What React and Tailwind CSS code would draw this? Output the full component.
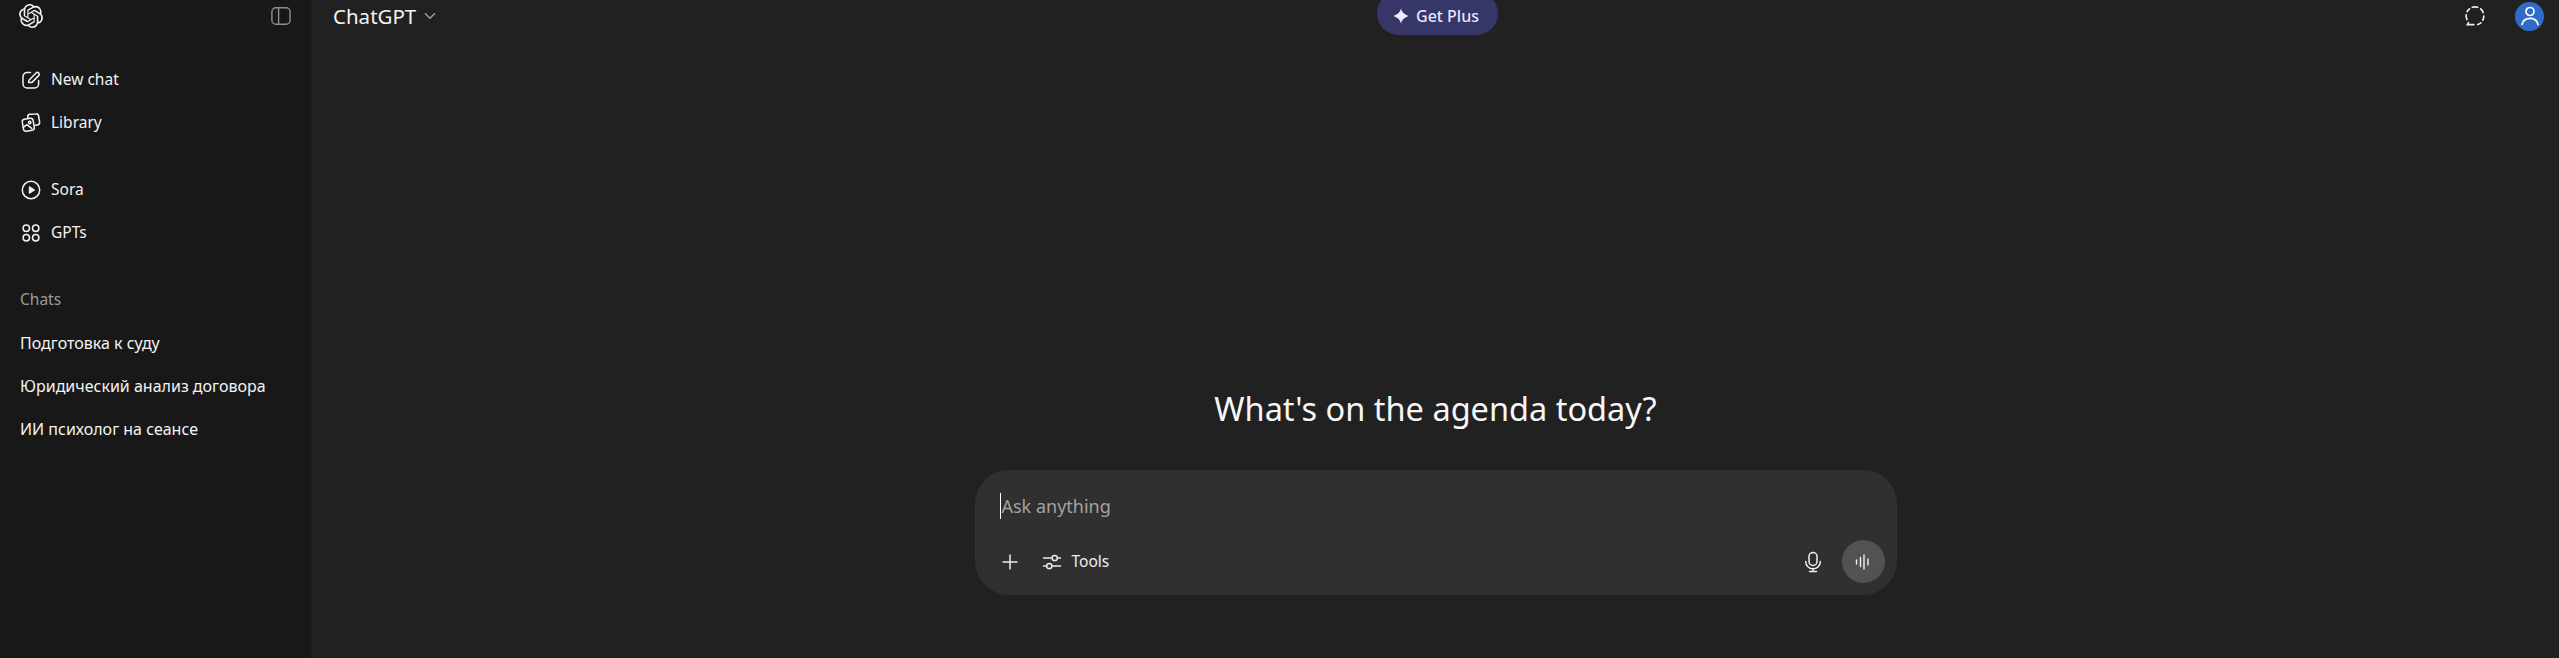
import { SiOpenai } from 'react-icons/si';
import { ChevronDown, Plus } from 'lucide-react';

const PanelIcon = () => (
  <svg width="20" height="20" viewBox="0 0 20 20" fill="none" stroke="#8f8f8f" strokeWidth="1.4">
    <rect x="0.9" y="1.7" width="18.2" height="16.6" rx="4" />
    <path d="M7.6 1.7v16.6" />
  </svg>
);

const NewChatIcon = () => (
  <svg width="20" height="20" viewBox="0 0 20 20" fill="none" stroke="#f3f3f3" strokeWidth="1.5" strokeLinecap="round" strokeLinejoin="round">
    <path d="M9.5 2.6H6A4 4 0 0 0 2 6.6v7.4a4 4 0 0 0 4 4h7.6a4 4 0 0 0 4-4v-3.6" />
    <path d="M7.6 12.6l.5-2.6 7-7a1.8 1.8 0 0 1 2.6 2.6l-7 7z" />
  </svg>
);

const LibraryIcon = () => (
  <svg width="20" height="20" viewBox="0 0 20 20" fill="none" stroke="#f3f3f3" strokeWidth="1.5" strokeLinecap="round" strokeLinejoin="round">
    <path d="M1.3 9.2a2.6 2.6 0 0 1 2.1-3l5.7-1a2.6 2.6 0 0 1 3 2.1l1.2 7a2.6 2.6 0 0 1-2.1 3l-5.7 1a2.6 2.6 0 0 1-3-2.1z" />
    <path d="M7 5.5l-.2-1.2a2.6 2.6 0 0 1 2.1-3L14.6 .9a2.6 2.6 0 0 1 3 2.1l1 5.9a2.6 2.6 0 0 1-2.1 3l-2.3.4" />
    <circle cx="8.7" cy="9.5" r="1.2" />
    <path d="M2.3 14.3l3.5-2.6 5 3.7" />
  </svg>
);

const SoraIcon = () => (
  <svg width="20" height="20" viewBox="0 0 20 20" fill="none">
    <circle cx="10" cy="10" r="8.7" stroke="#f3f3f3" strokeWidth="1.5" />
    <path d="M7.8 6.8a.6.6 0 0 1 .9-.5l5 3.2a.6.6 0 0 1 0 1l-5 3.2a.6.6 0 0 1-.9-.5z" fill="#f3f3f3" />
  </svg>
);

const GptsIcon = () => (
  <svg width="20" height="20" viewBox="0 0 20 20" fill="none" stroke="#f3f3f3" strokeWidth="1.5">
    <circle cx="5.3" cy="5.3" r="3.2" />
    <circle cx="14.7" cy="5.3" r="3.2" />
    <circle cx="5.3" cy="14.7" r="3.2" />
    <circle cx="14.7" cy="14.7" r="3.2" />
  </svg>
);

const Spark = () => (
  <svg width="16" height="16" viewBox="0 0 16 16" fill="#eeeaff">
    <path d="M8 .5c.9 3.6 3 5.8 7.5 7.5C11 9.7 8.9 11.9 8 15.5 7.1 11.9 5 9.7.5 8 5 6.3 7.1 4.1 8 .5z" />
  </svg>
);

const TempChatIcon = () => (
  <svg width="22" height="22" viewBox="0 0 22 22" fill="none" stroke="#f0f0f0" strokeWidth="1.7" strokeLinecap="round">
    <path d="M8.3 2.3a9 9 0 0 1 5.4 0" />
    <path d="M16.7 3.8a9 9 0 0 1 2.5 3.7" />
    <path d="M19.8 11a9 9 0 0 1-1 4.2" />
    <path d="M16.9 17.8c-1 .8-2 1.3-3.2 1.7" />
    <path d="M9.8 19.7H3.4l1.1-2" />
    <path d="M2.9 14.5a9 9 0 0 1-.7-4.6" />
    <path d="M3.2 6.5a9 9 0 0 1 2.3-2.7" />
  </svg>
);

const SlidersIcon = () => (
  <svg width="20" height="20" viewBox="0 0 20 20" fill="none" stroke="#ececec" strokeWidth="1.5" strokeLinecap="round">
    <path d="M1.5 6h8.5M15.5 6h3" />
    <circle cx="12.7" cy="6" r="2.6" />
    <path d="M1.5 14h3M10 14h8.5" />
    <circle cx="7.3" cy="14" r="2.6" />
  </svg>
);

const MicIcon = () => (
  <svg width="20" height="22" viewBox="0 0 20 22" fill="none" stroke="#f0f0f0" strokeWidth="1.5" strokeLinecap="round">
    <rect x="6" y="1.5" width="8" height="13" rx="4" />
    <path d="M2.7 10.5a7.3 7.3 0 0 0 14.6 0" />
    <path d="M10 18v2.5M6.5 20.5h7" />
  </svg>
);

const VoiceIcon = () => (
  <svg width="18" height="16" viewBox="0 0 18 16" fill="none" stroke="#f0f0f0" strokeWidth="1.4" strokeLinecap="round">
    <path d="M2.5 6v4M6.5 3.5v9M10 1v14M14 5v6" />
  </svg>
);

const UserIcon = () => (
  <svg width="22" height="22" viewBox="0 0 22 22" fill="none" stroke="#fff" strokeWidth="1.7" strokeLinecap="round">
    <circle cx="11" cy="6.5" r="4" />
    <path d="M3 19.5c.8-4 4-6.2 8-6.2s7.200 2.200 8 6.200" />
  </svg>
);

const NavItem = ({ icon, label }) => (
  <div className="flex h-[43px] items-center gap-[10px] pl-[21px] text-[15.5px] text-[#f3f3f3]">
    {icon}
    <span>{label}</span>
  </div>
);

const ChatItem = ({ label }) => (
  <div className="flex h-[43px] items-center pl-[20px] text-[16px] text-[#f3f3f3]">{label}</div>
);

export default function App() {
  return (
    <div className="flex h-screen overflow-hidden bg-[#212121] font-['Noto_Sans',sans-serif]">
      <aside className="flex w-[312px] shrink-0 flex-col border-r border-[#1f1f1f] bg-[#181818]">
        <div className="flex h-[32px] items-center justify-between pl-[19px] pr-[20px]">
          <SiOpenai size={24} color="#f3f3f3" />
          <PanelIcon />
        </div>
        <nav className="mt-[26px]">
          <NavItem icon={<NewChatIcon />} label="New chat" />
          <NavItem icon={<LibraryIcon />} label="Library" />
        </nav>
        <nav className="mt-[24px]">
          <NavItem icon={<SoraIcon />} label="Sora" />
          <NavItem icon={<GptsIcon />} label="GPTs" />
        </nav>
        <div className="mt-[24px]">
          <div className="flex h-[43px] items-center pl-[20px] text-[15.5px] text-[#9b9b9b]">Chats</div>
          <ChatItem label="Подготовка к суду" />
          <ChatItem label="Юридический анализ договора" />
          <ChatItem label="ИИ психолог на сеансе" />
        </div>
      </aside>

      <main className="flex min-w-0 flex-1 flex-col">
        <header className="grid h-[32px] grid-cols-[1fr_auto_1fr] grid-rows-[32px] items-center pl-[21px] pr-[15px]">
          <div className="flex items-center gap-[5px] text-[20.5px] text-[#f3f3f3]">
            ChatGPT
            <ChevronDown size={18} color="#9b9b9b" />
          </div>
          <div className="flex h-[43px] -translate-x-[1px] -translate-y-[3px] items-center gap-[7px] rounded-full bg-[#373669] pt-[6px] pl-[16px] pr-[19px] text-[16px] font-medium text-[#e6e4ff]">
            <Spark />
            Get Plus
          </div>
          <div className="flex items-center justify-end gap-[29px]">
            <TempChatIcon />
            <div className="flex h-[29px] w-[29px] items-center justify-center rounded-full bg-[#2f6bc9]">
              <UserIcon />
            </div>
          </div>
        </header>

        <div className="flex flex-1 flex-col items-center justify-end pb-[63px]">
          <h1 className="mb-[39px] text-[32.5px] leading-[44px] font-normal text-[#f7f7f7]">What's on the agenda today?</h1>
          <div className="flex h-[125px] w-[922px] flex-col rounded-[34px] bg-[#303030] px-[25px] pt-[18px]">
            <div className="flex h-[36px] items-center text-[18px] text-[#a3a3a3]">
              <span className="mr-px h-[26px] w-px bg-white" />
              Ask anything
            </div>
            <div className="mt-[16px] flex items-center">
              <Plus size={24} color="#ececec" strokeWidth={1.5} className="-ml-[2px]" />
              <div className="ml-[20px] flex items-center gap-[10px] text-[15.5px] text-[#f0f0f0]">
                <SlidersIcon />
                Tools
              </div>
              <div className="ml-auto -mr-[13px] flex items-center gap-[19px]">
                <MicIcon />
                <div className="flex h-[43px] w-[43px] items-center justify-center rounded-full bg-[#525252]">
                  <VoiceIcon />
                </div>
              </div>
            </div>
          </div>
        </div>
      </main>
    </div>
  );
}
